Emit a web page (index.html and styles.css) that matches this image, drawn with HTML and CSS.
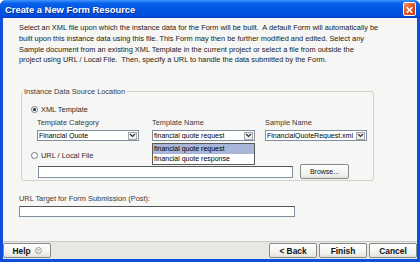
FILE: index.html
```html
<!DOCTYPE html>
<html lang="en">
<head>
    <meta charset="UTF-8">
    <title>Create a New Form Resource</title>
    <link rel="stylesheet" href="styles.css">
</head>
<body>
    <div class="window">
        <div class="titlebar">
            <span class="title">Create a New Form Resource</span>
            <span class="close-btn">
                <svg width="13" height="14" viewBox="0 0 13 14"><path d="M3.7 4.2 L9.3 9.8 M9.3 4.2 L3.7 9.8" stroke="#fff" stroke-width="1.7" stroke-linecap="round"/></svg>
            </span>
        </div>
        <div class="client">
            <div class="content">
                <p class="intro">Select an XML file upon which the instance data for the Form will be built.&nbsp; A default Form will automatically be<br>built upon this instance data using this file. This Form may then be further modified and edited. Select any<br>Sample document from an existing XML Template in the current project or select a file from outside the<br>project using URL / Local File.&nbsp; Then, specify a URL to handle the data submitted by the Form.</p>

                <fieldset class="group">
                    <legend>Instance Data Source Location</legend>
                    <div class="radio-row"><span class="radio checked"></span>XML Template</div>
                    <div class="fields">
                        <div class="field field-cat">
                            <div class="field-label">Template Category</div>
                            <div class="combo">
                                <span class="combo-text">Financial Quote</span>
                                <span class="combo-arrow"><svg width="7" height="5" viewBox="0 0 7 5"><path d="M1 1 L3.5 3.5 L6 1" fill="none" stroke="#333" stroke-width="1.2"/></svg></span>
                            </div>
                        </div>
                        <div class="field field-name">
                            <div class="field-label">Template Name</div>
                            <div class="combo">
                                <span class="combo-text">financial quote request</span>
                                <span class="combo-arrow"><svg width="7" height="5" viewBox="0 0 7 5"><path d="M1 1 L3.5 3.5 L6 1" fill="none" stroke="#333" stroke-width="1.2"/></svg></span>
                                <div class="droplist">
                                    <div class="drop-item selected">financial quote request</div>
                                    <div class="drop-item">financial quote response</div>
                                </div>
                            </div>
                        </div>
                        <div class="field field-sample">
                            <div class="field-label">Sample Name</div>
                            <div class="combo">
                                <span class="combo-text">FinancialQuoteRequest.xml</span>
                                <span class="combo-arrow"><svg width="7" height="5" viewBox="0 0 7 5"><path d="M1 1 L3.5 3.5 L6 1" fill="none" stroke="#333" stroke-width="1.2"/></svg></span>
                            </div>
                        </div>
                    </div>
                    <div class="radio-row radio-url"><span class="radio"></span>URL / Local File</div>
                    <div class="file-row">
                        <div class="textbox file-box"></div>
                        <button class="btn browse-btn">Browse...</button>
                    </div>
                </fieldset>

                <div class="post-label">URL Target for Form Submission (Post):</div>
                <div class="textbox post-box"></div>
            </div>

            <div class="footer">
                <button class="btn help-btn">Help <span class="help-icon">?</span></button>
                <div class="nav-buttons">
                    <button class="btn">&lt; Back</button>
                    <button class="btn">Finish</button>
                    <button class="btn">Cancel</button>
                </div>
            </div>
        </div>
    </div>
</body>
</html>
```

FILE: styles.css
```css
/* 基础 */
* {
    box-sizing: border-box;
    margin: 0;
    padding: 0;
}
body {
    width: 420px;
    height: 262px;
    overflow: hidden;
    font-family: 'Liberation Sans', Arial, sans-serif;
    background: #fff;
}

/* 窗口外框 */
.window {
    width: 420px;
    height: 262px;
    display: flex;
    flex-direction: column;
    background: #0b4fdc;
    border-radius: 6px 6px 0 0;
}

/* 标题栏 */
.titlebar {
    height: 18px;
    display: flex;
    align-items: center;
    justify-content: space-between;
    padding: 0 4px 0 5px;
    background: linear-gradient(#3d95ff 0%, #0a62ea 18%, #0054e3 50%, #0150e0 80%, #003fcc 100%);
    border-radius: 6px 6px 0 0;
}

.title {
    color: #fff;
    font-size: 9.4px;
    font-weight: bold;
    text-shadow: 1px 1px 0 #0a2c8e;
}

.close-btn {
    width: 13px;
    height: 14px;
    display: flex;
    border: 1px solid #fff;
    border-radius: 2px;
    background: linear-gradient(135deg, #f3956c, #e0501f 55%, #c83c10);
}

/* 内容区 */
.client {
    flex: 1;
    display: flex;
    flex-direction: column;
    margin: 0 3px 3px 3px;
    background: #f6f6f4;
}

.content {
    flex: 1;
    padding: 5px 0 0 16px;
    font-size: 7.4px;
    color: #1c1c1c;
}

.intro {
    line-height: 10.8px;
    color: #1a1a1a;
}

/* 分组框 */
.group {
    width: 353px;
    margin: 21px 0 0 2px;
    padding: 8px 0 1px 0;
    border: 1px solid #d0d0cc;
    border-radius: 3px;
}

.group legend {
    margin-left: 1px;
    padding: 0 1px;
    line-height: 9px;
    color: #3a3a3a;
}

.radio-row {
    height: 10px;
    display: flex;
    align-items: center;
    gap: 3px;
    padding-left: 9px;
    color: #2a2a2a;
}

.radio {
    width: 7px;
    height: 7px;
    border: 1px solid #6b7a8a;
    border-radius: 50%;
    background: #fff;
    display: flex;
    align-items: center;
    justify-content: center;
}

.radio.checked::after {
    content: '';
    width: 3px;
    height: 3px;
    border-radius: 50%;
    background: #1e2a1e;
}

.radio-url {
    margin-top: 9px;
}

/* 下拉框 */
.fields {
    display: flex;
    padding-left: 15px;
    margin-top: 4px;
}

.field-cat { width: 102px; }
.field-name { width: 103px; margin-left: 13px; }
.field-sample { width: 102px; margin-left: 10px; }

.field-label {
    line-height: 9px;
    color: #3a3a3a;
    margin-bottom: 3px;
}

.combo {
    position: relative;
    height: 11px;
    display: flex;
    align-items: center;
    border: 1px solid #7f8f9f;
    background: #fff;
    padding-right: 1px;
}

.combo-text {
    flex: 1;
    padding-left: 1px;
    font-size: 7px;
    color: #000;
    white-space: nowrap;
    overflow: hidden;
}

.combo-arrow {
    width: 9px;
    height: 8px;
    display: flex;
    align-items: center;
    justify-content: center;
    border: 1px solid #a9a9a9;
    background: #f0f0f0;
}

.droplist {
    position: absolute;
    top: 12px;
    left: -1px;
    width: 103px;
    border: 1px solid #5a5a5a;
    background: #fff;
}

.drop-item {
    height: 10px;
    line-height: 10px;
    padding-left: 1px;
    font-size: 7px;
    color: #000;
}

.drop-item.selected {
    background: #a9b5d9;
}

/* 文件行 */
.file-row {
    display: flex;
    align-items: center;
    margin-top: 4px;
    padding-left: 16px;
    height: 15px;
}

.textbox {
    border: 1px solid #7f8f9f;
    border-top-color: #555;
    background: #fff;
}

.file-box {
    width: 255px;
    height: 12px;
}

.btn {
    font-family: 'Liberation Sans', Arial, sans-serif;
    background: linear-gradient(#ffffff, #f1f1ee 70%, #e2e2dc);
    border: 1px solid #8a8a8a;
    border-radius: 2px;
    color: #111;
    display: flex;
    align-items: center;
    justify-content: center;
}

.browse-btn {
    width: 49px;
    height: 15px;
    margin-left: 7px;
    font-size: 7px;
}

.post-label {
    margin-top: 13px;
    line-height: 9px;
    color: #3a3a3a;
}

.post-box {
    width: 276px;
    height: 11px;
    margin-top: 3px;
}

/* 底部按钮 */
.footer {
    height: 18px;
    display: flex;
    justify-content: space-between;
    align-items: flex-start;
    padding-top: 1px;
    border-top: 1px solid #c9c9c5;
    background: #e7e7e4;
}

.footer .btn {
    width: 48px;
    height: 15px;
    font-size: 8.4px;
    font-weight: bold;
}

.nav-buttons {
    display: flex;
    gap: 2px;
}

.help-btn {
    gap: 4px;
}

.help-icon {
    width: 7px;
    height: 7px;
    border: 1px solid #9a9a9a;
    border-radius: 50%;
    font-size: 5px;
    font-weight: normal;
    color: #8a8a8a;
    display: flex;
    align-items: center;
    justify-content: center;
}
```
